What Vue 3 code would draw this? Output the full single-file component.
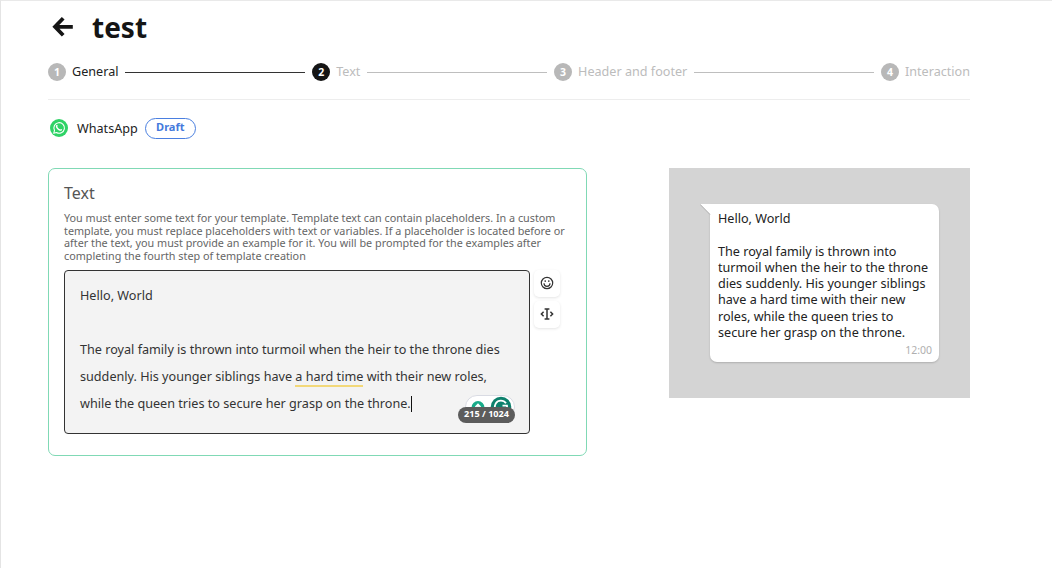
<script setup>
const steps = [
  { label: 'General', state: 'done' },
  { label: 'Text', state: 'current' },
  { label: 'Header and footer', state: 'next' },
  { label: 'Interaction', state: 'next' },
]
const help = [
  'You must enter some text for your template. Template text can contain placeholders. In a custom',
  'template, you must replace placeholders with text or variables. If a placeholder is located before or',
  'after the text, you must provide an example for it. You will be prompted for the examples after',
  'completing the fourth step of template creation',
].join('\n')
const message = [
  'Hello, World',
  '',
  'The royal family is thrown into',
  'turmoil when the heir to the throne',
  'dies suddenly. His younger siblings',
  'have a hard time with their new',
  'roles, while the queen tries to',
  'secure her grasp on the throne.',
].join('\n')
</script>

<template>
  <main class="page">
    <header class="title">
      <svg class="back" width="22" height="22" viewBox="0 0 22 22" fill="none" stroke="#151515" stroke-width="3.800">
        <path d="M11.200 2.300 3 10.800l8.200 8.500M3.500 10.800h17.300" />
      </svg>
      <h1>test</h1>
    </header>

    <nav class="steps">
      <template v-for="(s, i) in steps" :key="s.label">
        <div class="step" :class="s.state">
          <span class="num">{{ i + 1 }}</span>
          <span class="label">{{ s.label }}</span>
        </div>
        <i v-if="i < steps.length - 1" class="line" :class="s.state"></i>
      </template>
    </nav>

    <div class="channel">
      <svg width="18" height="18" viewBox="0 0 18 18" fill="none">
        <circle cx="9" cy="9" r="9" fill="#2fd366" />
        <path d="M3.700 14.300l.8-2.900a5.300 5.300 0 1 1 2 2.100z" stroke="#fff" stroke-width="1.100" stroke-linejoin="round" />
        <path d="M6.900 6.500c-.8 1.100.2 2.600 1.200 3.500s2.500 1.600 3.200.7" stroke="#fff" stroke-width="1.400" stroke-linecap="round" />
      </svg>
      <span class="name">WhatsApp</span>
      <span class="draft">Draft</span>
    </div>

    <div class="columns">
      <section class="card">
        <h2>Text</h2>
        <p class="help">{{ help }}</p>
        <div class="row">
          <div class="editor">
            <div>Hello, World</div>
            <div>&nbsp;</div>
            <div>The royal family is thrown into turmoil when the heir to the throne dies</div>
            <div>suddenly. His younger siblings have <span class="hint">a hard time</span> with their new roles,</div>
            <div>while the queen tries to secure her grasp on the throne.<i class="caret"></i></div>
            <div class="assistant">
              <svg width="50" height="24" viewBox="0 0 50 24" fill="none">
                <rect x=".5" y=".5" width="49" height="23" rx="11.500" fill="#fff" stroke="#d9dbe3" />
                <circle cx="13" cy="12.500" r="6.500" fill="#18ab89" />
                <path d="M13 14v-4.500M10.500 12 13 9.500l2.500 2.500" stroke="#fff" stroke-width="1.600" />
                <circle cx="36" cy="12" r="10.300" fill="#0d806c" />
                <path d="M41 8.300A6.200 6.200 0 1 0 42 10.700h-4.500" stroke="#fff" stroke-width="1.800" />
              </svg>
            </div>
            <span class="counter">215 / 1024</span>
          </div>
          <div class="tools">
            <button>
              <svg width="14" height="14" viewBox="0 0 14 14" fill="none" stroke="#333" stroke-width="1.200">
                <circle cx="7" cy="7" r="5.700" />
                <path d="M4 7.300a3 3 0 0 0 6 0" />
                <path d="M5.200 4.300v1.600M8.800 4.300v1.600" />
              </svg>
            </button>
            <button>
              <svg width="14" height="14" viewBox="0 0 14 14" fill="none" stroke="#333" stroke-width="1.500">
                <path d="M7 2v10M4.600 1.900h4.800M4.600 12.100h4.800M3.600 4.800 1.400 7l2.200 2.200M10.400 4.800 12.600 7l-2.200 2.200" />
              </svg>
            </button>
          </div>
        </div>
      </section>

      <aside class="preview">
        <div class="bubble">
          <svg class="tail" width="11" height="12" viewBox="0 0 11 12">
            <path d="M0 0h11v12L10 10z" fill="#fff" />
            <path d="M0 .3 10 10.500" stroke="#b0b0b0" stroke-width="1" />
          </svg>
          <p>{{ message }}</p>
          <time>12:00</time>
        </div>
      </aside>
    </div>
  </main>
</template>

<style>
body { background: #fff; overflow: hidden; }
</style>

<style scoped>
* { box-sizing: border-box; margin: 0; }
.page {
  width: 1052px; height: 568px; padding: 10px 81px 0 47px;
  border-top: 1px solid #e9e9e9; border-left: 1px solid #e4e4e4;
  font-family: "Noto Sans", sans-serif; font-size: 12.5px; color: #222;
  background: #fff;
}
.title { display: flex; align-items: center; height: 34px; padding-left: 4px; }
.back { margin-top: -2px; }
h1 { margin: -2px 0 0 18px; font-size: 28px; line-height: 34px; font-weight: 700; color: #151515; }
.steps { display: flex; align-items: center; height: 55px; border-bottom: 1px solid #ededed; width: 922px; }
.step { display: flex; align-items: center; gap: 6px; font-size: 12.62px; line-height: 18px; color: #bcbcbc; white-space: nowrap; flex: none; }
.step.done { color: #222; }
.num {
  width: 18px; height: 18px; border-radius: 50%; background: #b8b8b8; color: #fff;
  font-size: 10.5px; font-weight: 700; text-align: center; line-height: 18px;
}
.current .num { background: #151515; }
.line { flex: 1; height: 1px; margin: 0 7px 0 6.5px; background: #bebebe; }
.line.done { background: #333; }
.channel { display: flex; align-items: center; height: 22px; margin-top: 17px; padding-left: 2px; }
.name { margin-left: 9px; font-size: 12.62px; }
.draft {
  margin-left: 7px; width: 51px; height: 21px; border: 1px solid #4a7fe0; border-radius: 11px;
  color: #4579dc; font-size: 11px; font-weight: 700; line-height: 16px; text-align: center;
}
.columns { display: flex; justify-content: space-between; align-items: flex-start; margin-top: 29px; width: 922px; }
.card { width: 539px; height: 288px; border: 1px solid #80d9b5; border-radius: 7px; padding: 13px 15px; }
h2 { font-size: 16px; font-weight: 400; line-height: 22px; color: #555; }
.help { margin-top: 8px; font-size: 10.8px; line-height: 12.67px; color: #666; white-space: pre; }
.row { display: flex; gap: 4px; margin-top: 7px; }
.editor {
  position: relative; width: 466px; height: 164px; border: 1px solid #333; border-radius: 4px;
  background: #f3f3f3; padding: 11px 15px; font-size: 12.63px; line-height: 27px; white-space: nowrap; color: #333;
}
.hint { border-bottom: 2px solid #f2d879; }
.caret { display: inline-block; width: 1px; height: 16px; background: #111; vertical-align: -4px; }
.assistant { position: absolute; left: 400px; top: 124px; height: 24px; line-height: 0; }
.counter {
  position: absolute; left: 393px; top: 136px; width: 57px; height: 16px; border-radius: 8px;
  background: #5c5c5c; color: #fff; font-size: 9.1px; font-weight: 700; line-height: 14px; text-align: center;
}
.tools { display: flex; flex-direction: column; gap: 4px; }
button {
  display: grid; place-items: center; width: 26px; height: 27px; padding: 0; border: 0;
  border-radius: 5px; background: #fff; box-shadow: 0 1px 3px #0000001c;
}
.preview { width: 301px; height: 230px; background: #d4d4d4; padding: 36px 0 0 41px; }
.bubble {
  position: relative; width: 229px; height: 158px; padding: 7px 7px 0 8px; border-radius: 0 7px 7px 7px;
  background: #fff; box-shadow: 0 1px 2px #0000002e;
}
.bubble p { white-space: pre; font-size: 12.62px; line-height: 16.25px; }
.tail { position: absolute; left: -10px; top: 0; }
time { position: absolute; right: 7px; bottom: 4px; font-size: 10.5px; line-height: 15px; color: #b0b0b0; }
</style>
